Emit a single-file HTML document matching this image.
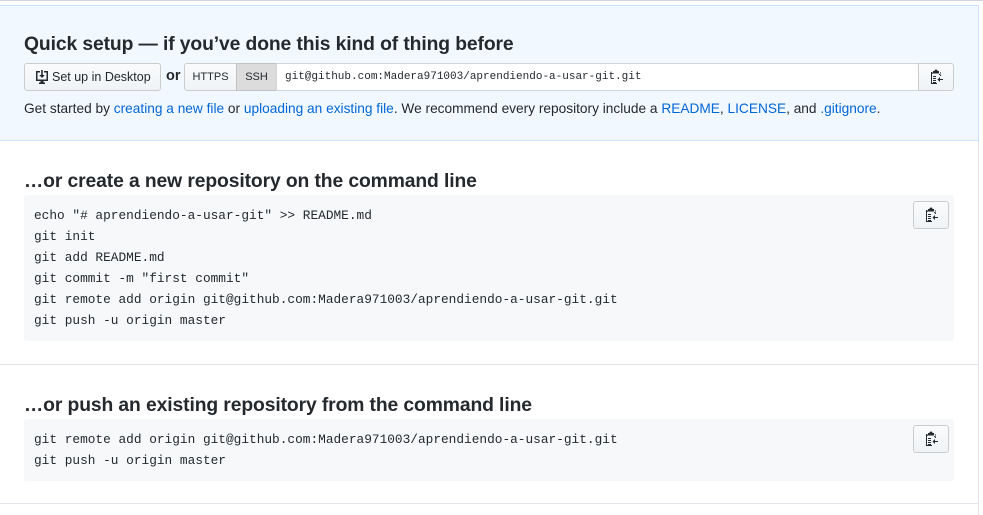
<!DOCTYPE html>
<html><head><meta charset="utf-8"><style>
*{box-sizing:border-box}
body{margin:0;width:983px;height:509px;overflow:hidden;background:#fff;font-family:"Liberation Sans",sans-serif;color:#24292e}
.top{position:absolute;left:0;top:0;width:983px;height:1px;background:#d1d5da}
.wrap{position:absolute;left:0;top:5px;width:979px;height:510px;border-right:1px solid #e1e4e8}
.blue{position:absolute;left:0;top:0;width:979px;height:136px;background:#f1f8ff;border:1px solid #c8e1ff;border-left:none}
h3{margin:0;font-weight:bold;font-size:19.3px;position:absolute;left:24px;color:#24292e;letter-spacing:-0.1px}
.btn{position:absolute;height:28px;border:1px solid #ccc;border-radius:3px;background:linear-gradient(#fafbfc,#eff3f6);font-size:12.5px;display:flex;align-items:center}
.mono{font-family:"Liberation Mono",monospace;font-size:12.8px}
.p{position:absolute;left:24px;top:95px;font-size:13.7px}
a{color:#0366d6;text-decoration:none}
.code{position:absolute;left:24px;width:930px;background:#f6f8fa;border-radius:3px;padding:10px 10px;line-height:21px;white-space:pre;color:#24292e}
.sep{position:absolute;left:0;width:979px;height:1px;background:#e1e4e8}
.cb{position:absolute;width:36px;height:28px;border:1px solid #ccc;border-radius:3px;background:linear-gradient(#fafbfc,#eff3f6);display:flex;align-items:center;justify-content:center}
</style></head><body>
<div class="top"></div>
<div class="wrap">
<div class="blue">
<h3 style="top:28px">Quick setup — if you’ve done this kind of thing before</h3>
<div class="btn" style="left:24px;top:57px;width:137px;padding-left:9px">
<svg width="16" height="16" viewBox="0 0 16 16" style="margin-right:2px"><path d="M2 2h4v1.5H3.5v7h9v-7H10V2h4v10H9.5v1.5H11V15H5v-1.5h1.5V12H2z" fill="#24292e"/><path d="M7.2 1h1.6v5h2l-2.8 3-2.8-3h2z" fill="#24292e"/></svg>Set up in Desktop</div>
<div style="position:absolute;left:166px;top:62px;font-size:14.5px;font-weight:bold">or</div>
<div class="btn" style="left:184px;top:57px;width:53px;border-radius:3px 0 0 3px;justify-content:center;font-size:11px">HTTPS</div>
<div class="btn" style="left:236px;top:57px;width:41px;border-radius:0;justify-content:center;font-size:11px;background:#dcdcdc;border-color:#c2c2c2">SSH</div>
<div style="position:absolute;left:276px;top:57px;width:643px;height:28px;background:#fff;border:1px solid #d1d5da;padding:6px 8px;font-size:11px;line-height:15px" class="mono">git@github.com:Madera971003/aprendiendo-a-usar-git.git</div>
<div class="cb" style="left:918px;top:57px;border-radius:0 3px 3px 0"><svg width="14" height="16" viewBox="0 0 14 16"><path d="M4 2h1.5a1.5 1.5 0 013 0H10v2H4z M2 3h1.5v1.5H10V6h1.5V3.5L11 3H12v4h-1V5H3v9h5v1H2z M4 7h3v1H4zM4 9h3v1H4zM4 11h3v1H4zM4 13h3v1H4z M8.5 10.5L11 8v2h3v1h-3v2z" fill="#24292e"/></svg></div>
<div class="p">Get started by <a>creating a new file</a> or <a>uploading an existing file</a>. We recommend every repository include a <a>README</a>, <a>LICENSE</a>, and <a>.gitignore</a>.</div>
</div>
<h3 style="top:166px">…or create a new repository on the command line</h3>
<div class="code mono" style="top:190px;height:146px">echo "# aprendiendo-a-usar-git" &gt;&gt; README.md
git init
git add README.md
git commit -m "first commit"
git remote add origin git@github.com:Madera971003/aprendiendo-a-usar-git.git
git push -u origin master</div>
<div class="cb" style="left:913px;top:196px"><svg width="14" height="16" viewBox="0 0 14 16"><path d="M4 2h1.5a1.5 1.5 0 013 0H10v2H4z M2 3h1.5v1.5H10V6h1.5V3.5L11 3H12v4h-1V5H3v9h5v1H2z M4 7h3v1H4zM4 9h3v1H4zM4 11h3v1H4zM4 13h3v1H4z M8.5 10.5L11 8v2h3v1h-3v2z" fill="#24292e"/></svg></div>
<div class="sep" style="top:359px"></div>
<h3 style="top:390px">…or push an existing repository from the command line</h3>
<div class="code mono" style="top:414px;height:62px">git remote add origin git@github.com:Madera971003/aprendiendo-a-usar-git.git
git push -u origin master</div>
<div class="cb" style="left:913px;top:420px"><svg width="14" height="16" viewBox="0 0 14 16"><path d="M4 2h1.5a1.5 1.5 0 013 0H10v2H4z M2 3h1.5v1.5H10V6h1.5V3.5L11 3H12v4h-1V5H3v9h5v1H2z M4 7h3v1H4zM4 9h3v1H4zM4 11h3v1H4zM4 13h3v1H4z M8.5 10.5L11 8v2h3v1h-3v2z" fill="#24292e"/></svg></div>
<div class="sep" style="top:498px"></div>
</div>
</body></html>
